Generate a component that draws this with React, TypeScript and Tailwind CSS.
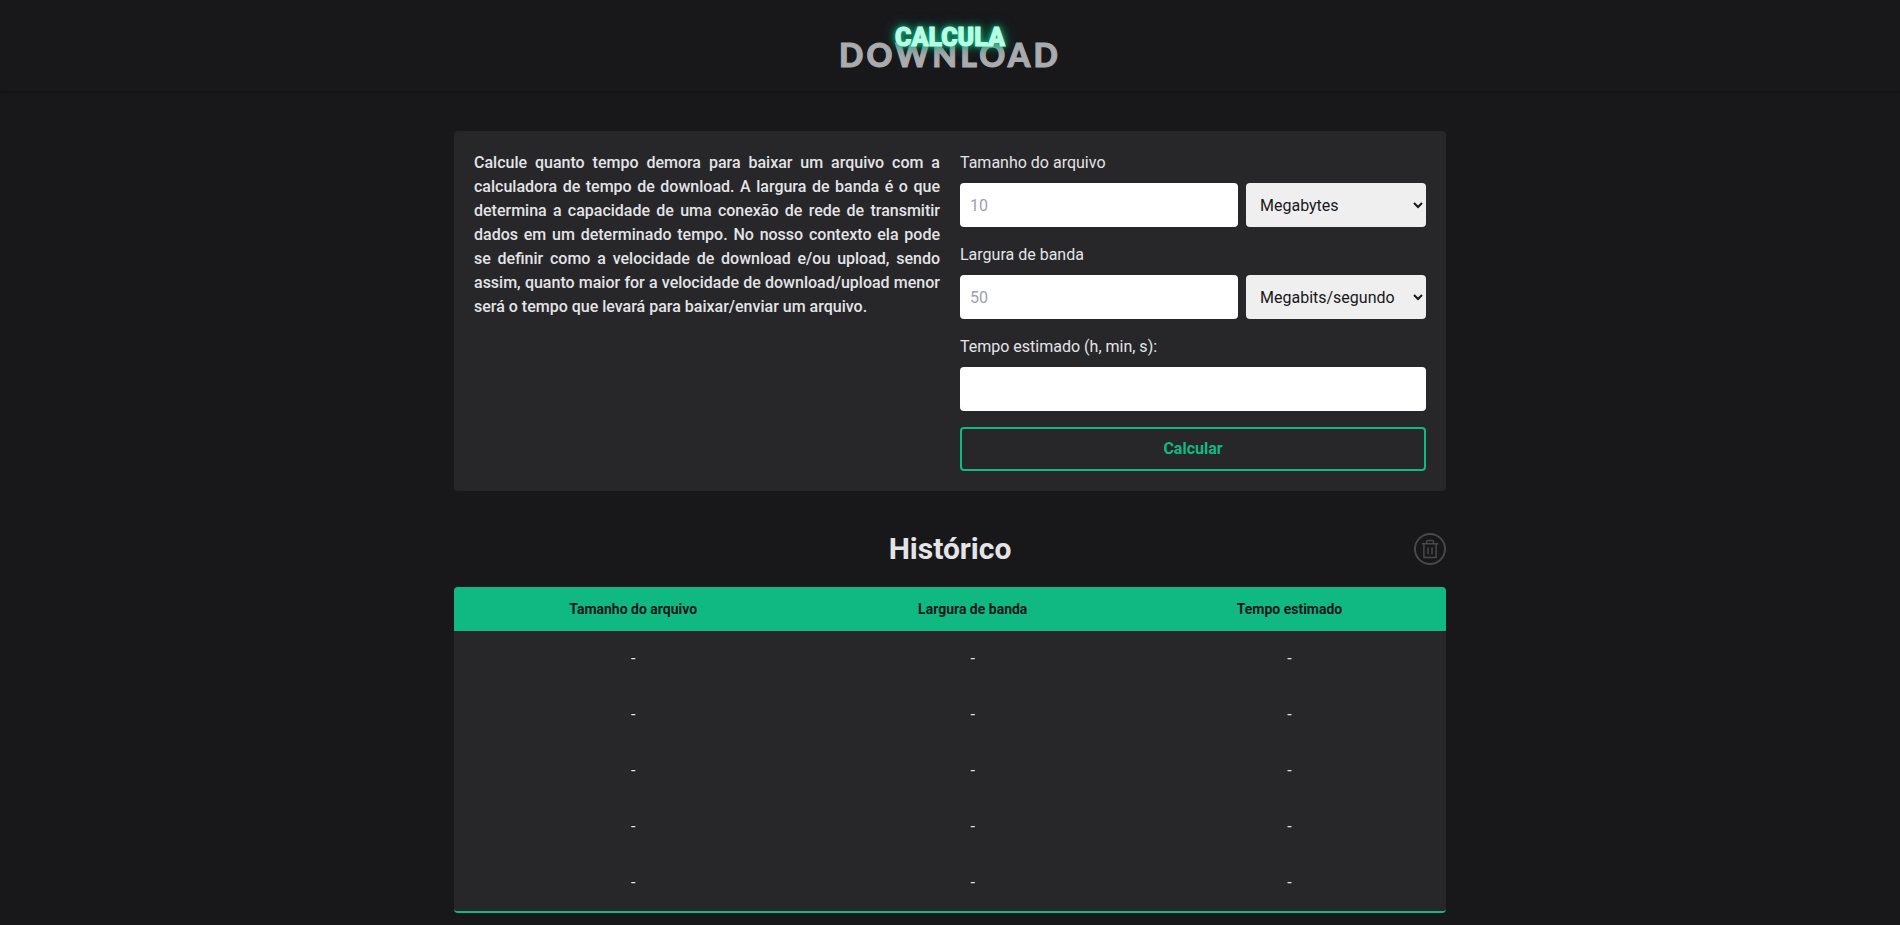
import React from 'react';

const columns = ['Tamanho do arquivo', 'Largura de banda', 'Tempo estimado'];
const rows = [1, 2, 3, 4, 5];

const inputClass =
  'h-11 w-full min-w-0 rounded bg-white px-2.5 text-base text-zinc-900 placeholder:text-zinc-400 outline-none';
const selectClass = 'h-11 w-[180px] shrink-0 rounded bg-[#efefef] px-2.5 text-base text-zinc-900 outline-none';

const Logo: React.FC = () => (
  <a href="#" aria-label="Calcula Download" className="grid justify-items-center">
    <span className="relative z-10 col-start-1 row-start-1 font-[Roboto,sans-serif] text-[25px] leading-9 font-black text-[#b9ffe6] [-webkit-text-stroke:1px_#b9ffe6] [text-shadow:0_0_4px_#10b981,0_0_8px_#10b981,0_0_14px_#0b7a57]">
      CALCULA
    </span>
    <span className="col-start-1 row-start-1 pt-[17px] font-[Lato,sans-serif] text-[32px] leading-9 font-black tracking-widest text-[#a9abae] [-webkit-text-stroke:1px_#a9abae]">
      DOWNLOAD
    </span>
  </a>
);

const TrashIcon: React.FC = () => (
  <svg viewBox="0 0 32 32" className="size-8" fill="none" stroke="currentColor" aria-hidden="true">
    <circle cx="16" cy="16" r="15" strokeWidth="2" />
    <path d="M7.8 10.8h16.4M12.6 10.8V8.4a1 1 0 0 1 1-1h4.8a1 1 0 0 1 1 1v2.4M9.9 10.8v13.6h12.2V10.8M14 14.5v6.8M18 14.5v6.8" strokeWidth="1.5" />
  </svg>
);

const Calculator: React.FC = () => (
  <section className="grid gap-5 rounded bg-zinc-800 p-5 md:grid-cols-2">
    <p className="text-justify font-medium">
      Calcule quanto tempo demora para baixar um arquivo com a calculadora de tempo de download. A largura de
      banda é o que determina a capacidade de uma conexão de rede de transmitir dados em um determinado tempo.
      No nosso contexto ela pode se definir como a velocidade de download e/ou upload, sendo assim, quanto
      maior for a velocidade de download/upload menor será o tempo que levará para baixar/enviar um arquivo.
    </p>
    <form className="flex flex-col gap-4" onSubmit={(e) => e.preventDefault()}>
      <div className="flex flex-col gap-2">
        <label htmlFor="size">Tamanho do arquivo</label>
        <div className="flex gap-2">
          <input id="size" type="text" placeholder="10" className={inputClass} />
          <select aria-label="Unidade do arquivo" className={selectClass}>
            <option>Megabytes</option>
            <option>Gigabytes</option>
          </select>
        </div>
      </div>
      <div className="flex flex-col gap-2">
        <label htmlFor="bandwidth">Largura de banda</label>
        <div className="flex gap-2">
          <input id="bandwidth" type="text" placeholder="50" className={inputClass} />
          <select aria-label="Unidade da banda" className={selectClass}>
            <option>Megabits/segundo</option>
            <option>Gigabits/segundo</option>
          </select>
        </div>
      </div>
      <div className="flex flex-col gap-2">
        <label htmlFor="time">Tempo estimado (h, min, s):</label>
        <input id="time" type="text" readOnly className={inputClass} />
      </div>
      <button
        type="submit"
        className="h-11 rounded border-2 border-[#10b981] font-bold text-[#10b981] hover:bg-[#10b981] hover:text-zinc-900"
      >
        Calcular
      </button>
    </form>
  </section>
);

const History: React.FC = () => (
  <section className="mt-10">
    <div className="grid grid-cols-[1fr_auto_1fr] items-center">
      <h2 className="col-start-2 text-3xl font-bold">Histórico</h2>
      <button type="button" aria-label="Limpar histórico" className="justify-self-end text-[#48484b]">
        <TrashIcon />
      </button>
    </div>
    <div className="mt-5 overflow-hidden rounded border-b-2 border-[#10b981] bg-zinc-800">
      <table className="w-full text-center">
        <thead className="bg-[#10b981] text-sm text-zinc-900">
          <tr className="h-11">
            {columns.map((column) => (
              <th key={column} className="px-6 font-bold">
                {column}
              </th>
            ))}
          </tr>
        </thead>
        <tbody>
          {rows.map((row) => (
            <tr key={row} className="h-14">
              {columns.map((column) => (
                <td key={column} className="px-6">
                  -
                </td>
              ))}
            </tr>
          ))}
        </tbody>
      </table>
    </div>
  </section>
);

export default function App() {
  return (
    <div className="min-h-screen bg-[#18181b] font-[Roboto,sans-serif] text-base text-zinc-200">
      <header className="flex justify-center pt-5 pb-[18px] shadow-sm shadow-black/25">
        <Logo />
      </header>
      <main className="mx-auto max-w-5xl px-4 pt-10 pb-3">
        <Calculator />
        <History />
      </main>
    </div>
  );
}
